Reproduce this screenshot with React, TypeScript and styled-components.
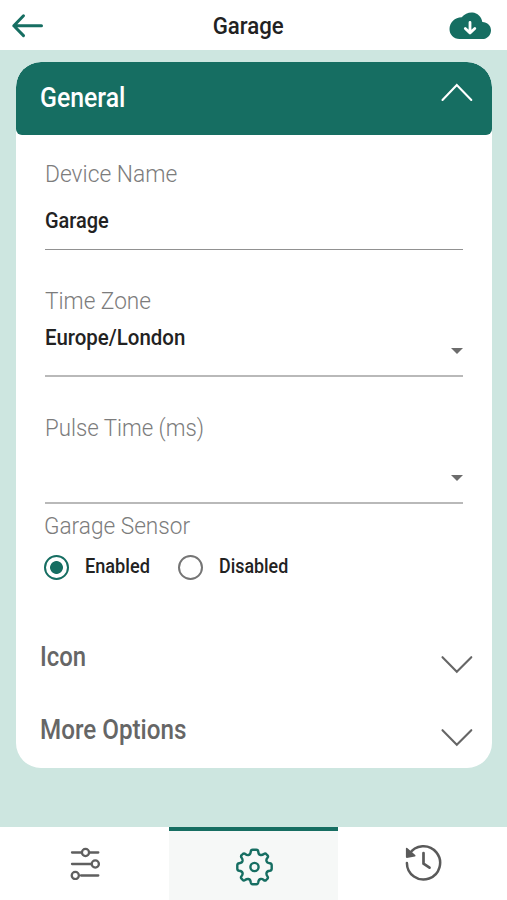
import React from 'react';
import styled, { createGlobalStyle } from 'styled-components';

const green = '#166e62';
const grey = '#666666';

const GlobalStyle = createGlobalStyle`
  * { box-sizing: border-box; }
  body { margin: 0; background: #cde6e0; font-family: Roboto, "Liberation Sans", sans-serif; }
  button { border: 0; padding: 0; background: none; font: inherit; color: inherit; display: flex; }
  svg { display: block; flex: none; }
`;

const Screen = styled.div`
  width: 507px;
  height: 900px;
  display: flex;
  flex-direction: column;
  background: #cde6e0;
  overflow: hidden;
`;

const TopBar = styled.header`
  height: 50px;
  flex: none;
  display: grid;
  grid-template-columns: 60px 1fr 60px;
  align-items: center;
  padding: 1px 15px 0 11px;
  background: #fff;
`;

const Title = styled.h1`
  margin: 0;
  padding-right: 7px;
  text-align: center;
  font-size: 23.5px;
  font-weight: 500;
  line-height: 28px;
  transform: scaleX(0.945);
  color: #222;
`;

const CloudButton = styled.button`
  justify-self: end;
`;

const Main = styled.main`
  flex: 1;
  padding: 12px 15px 0 16px;
`;

const Card = styled.section`
  height: 706px;
  border-radius: 25px;
  background: #fff;
  overflow: hidden;
`;

const SectionHeader = styled.div<{ $open?: boolean }>`
  height: 73px;
  display: flex;
  align-items: flex-start;
  justify-content: space-between;
  padding: 21px 19px 0 24px;
  border-radius: ${(p) => (p.$open ? '25px 25px 6px 6px' : '0')};
  background: ${(p) => (p.$open ? green : 'transparent')};
  color: ${(p) => (p.$open ? '#fff' : grey)};
`;

const SectionTitle = styled.h2<{ $stretch: number; $top: number }>`
  margin: ${(p) => p.$top}px 0 0;
  font-size: 27px;
  font-weight: 500;
  line-height: 28px;
  transform: scaleX(${(p) => p.$stretch});
  transform-origin: left;
`;

const ChevronBox = styled.span<{ $open?: boolean }>`
  display: flex;
  padding-top: ${(p) => (p.$open ? 0 : 14)}px;
`;

const Field = styled.div<{ $first?: boolean }>`
  height: ${(p) => (p.$first ? 115 : 127)}px;
  margin: 0 29px;
  padding-top: ${(p) => (p.$first ? 25 : 37)}px;
  border-bottom: ${(p) => (p.$first ? '1px solid #919191' : '2px solid #b9b9b9')};
`;

const Label = styled.div<{ $stretch: number }>`
  font-size: 24px;
  font-weight: 300;
  line-height: 28px;
  transform: scaleX(${(p) => p.$stretch});
  transform-origin: left;
  color: #7c7c7c;
`;

const Value = styled.div<{ $gap: number; $stretch: number }>`
  margin-top: ${(p) => p.$gap}px;
  font-size: 22px;
  font-weight: 500;
  line-height: 28px;
  transform: scaleX(${(p) => p.$stretch});
  transform-origin: left;
  color: #222;
`;

const SelectRow = styled.div`
  height: 64px;
  display: flex;
  justify-content: space-between;
`;

const Caret = styled.span`
  width: 0;
  height: 0;
  margin-top: 33px;
  border-left: 6px solid transparent;
  border-right: 6px solid transparent;
  border-top: 6px solid #6c6c6c;
`;

const Sensor = styled.div`
  height: 116px;
  padding: 8px 28px 0;
`;

const Options = styled.div`
  display: flex;
  margin-top: 15px;
`;

const Option = styled.label`
  width: 134px;
  display: flex;
  align-items: flex-start;
  gap: 16px;
  color: #222;
`;

const OptionText = styled.span<{ $stretch: number }>`
  font-size: 19.5px;
  font-weight: 500;
  line-height: 24px;
  transform: scaleX(${(p) => p.$stretch});
  transform-origin: left;
`;

const Radio = styled.span<{ $on?: boolean }>`
  flex: none;
  width: 25px;
  height: 25px;
  border-radius: 50%;
  border: 2.5px solid ${(p) => (p.$on ? green : '#757575')};
  background: ${(p) => (p.$on ? `radial-gradient(circle, ${green} 6px, transparent 6.8px)` : 'transparent')};
`;

const TabBar = styled.nav`
  height: 73px;
  flex: none;
  display: grid;
  grid-template-columns: 169px 169px 1fr;
  background: #fff;
`;

const Tab = styled.button<{ $active?: boolean }>`
  justify-content: center;
  align-items: flex-start;
  padding-top: ${(p) => (p.$active ? 16 : 17)}px;
  border-top: ${(p) => (p.$active ? `4px solid ${green}` : '0')};
  background: ${(p) => (p.$active ? '#f6f8f7' : '#fff')};
`;

function Chevron({ up = false }: { up?: boolean }) {
  return (
    <svg width="32" height="20" viewBox="0 0 32 20" fill="none" stroke="currentColor" strokeWidth="2.1" strokeLinecap="round">
      <path d={up ? 'M1.5 17 L15.8 2 L30.3 17' : 'M1.5 2.2 L15.8 16.7 L30.3 2.2'} />
    </svg>
  );
}

function BackArrow() {
  return (
    <svg width="34" height="26" viewBox="0 0 34 26" fill="none" stroke={green} strokeWidth="3" strokeLinecap="round" strokeLinejoin="round">
      <path d="M30.5 12.8 H2.8 M12.5 2.8 L2.8 12.8 L12.5 22.6" />
    </svg>
  );
}

function CloudDownload() {
  return (
    <svg width="43" height="28" viewBox="0.5 0 43 28">
      <path fill={green} d="M11 27 C5 27 1 22.6 1 17 C1 10.5 6.3 5.2 13.2 5.2 C16 2 20 0.2 24 .5 C29 1 33 4.8 33.8 9.9 C39 10 42.5 13.6 42.5 18.2 C42.5 23.2 38.7 27 33.8 27 Z" />
      <path d="M21.5 10.5 V20.5 M16.8 16.5 L21.5 21 L26.3 16.5" fill="none" stroke="#fff" strokeWidth="2.8" strokeLinecap="round" strokeLinejoin="round" />
    </svg>
  );
}

function SlidersIcon() {
  return (
    <svg width="32" height="36" viewBox="0 0 32 36" fill="none" stroke="#5f5f5f" strokeWidth="2.3" strokeLinecap="round">
      <path d="M3 8.5 H12 M20 8.5 H29.3 M3 20 H22 M12 31.5 H29.3" />
      <circle cx="16.5" cy="8.5" r="3.6" />
      <circle cx="26.3" cy="20" r="3.6" />
      <circle cx="6.3" cy="31.5" r="3.6" />
    </svg>
  );
}

function GearIcon() {
  return (
    <svg width="40" height="40" viewBox="-20.5 -20 40 40" fill="none" stroke={green} strokeWidth="2.4" strokeLinejoin="round">
      <path d="M-3.8 -15.2 Q-3.6 -17.2 -1.8 -17.2 H1.8 Q3.6 -17.2 3.8 -15.2 Q4 -12.4 6 -12 Q7.8 -11.7 9.4 -13 Q10.8 -14 12 -12.7 L13 -11.7 Q14.1 -10.5 13 -9.2 Q11.5 -7.5 12 -6 Q12.5 -4 15.2 -3.8 Q17.2 -3.6 17.2 -1.8 V1.8 Q17.2 3.6 15.2 3.8 Q12.4 4 12 6 Q11.7 7.8 13 9.4 Q14 10.8 12.7 12 L11.7 13 Q10.5 14.1 9.2 13 Q7.5 11.5 6 12 Q4 12.5 3.8 15.2 Q3.6 17.2 1.8 17.2 H-1.8 Q-3.6 17.2 -3.8 15.2 Q-4 12.4 -6 12 Q-7.8 11.7 -9.4 13 Q-10.8 14 -12 12.7 L-13 11.7 Q-14.1 10.5 -13 9.2 Q-11.5 7.5 -12 6 Q-12.5 4 -15.2 3.8 Q-17.2 3.6 -17.2 1.8 V-1.8 Q-17.2 -3.6 -15.2 -3.8 Q-12.4 -4 -12 -6 Q-11.7 -7.8 -13 -9.4 Q-14 -10.8 -12.7 -12 L-11.7 -13 Q-10.5 -14.1 -9.2 -13 Q-7.5 -11.5 -6 -12 Q-4 -12.5 -3.8 -15.2 Z" />
      <circle r="4.1" />
    </svg>
  );
}

function HistoryIcon() {
  return (
    <svg width="40" height="40" viewBox="0.3 0.5 40 40" fill="none" stroke="#5a5a5a" strokeWidth="2.5" strokeLinecap="round" strokeLinejoin="round">
      <path d="M4.2 19.4 A16.6 16.6 0 1 0 6.6 10.8" />
      <path d="M4 5 V13.6 L12 12.2 Z" fill="#5a5a5a" strokeWidth="1.6" />
      <path d="M20.8 9.5 V20.2 L26.8 24.2" strokeWidth="2.7" />
    </svg>
  );
}

export default function App() {
  return (
    <Screen>
      <GlobalStyle />
      <TopBar>
        <button aria-label="Back"><BackArrow /></button>
        <Title>Garage</Title>
        <CloudButton aria-label="Download"><CloudDownload /></CloudButton>
      </TopBar>
      <Main>
        <Card>
          <SectionHeader $open>
            <SectionTitle $stretch={0.92} $top={1}>General</SectionTitle>
            <ChevronBox $open><Chevron up /></ChevronBox>
          </SectionHeader>
          <Field $first>
            <Label $stretch={0.95}>Device Name</Label>
            <Value $gap={19} $stretch={0.907}>Garage</Value>
          </Field>
          <Field>
            <Label $stretch={0.942}>Time Zone</Label>
            <SelectRow>
              <Value $gap={9} $stretch={0.93}>Europe/London</Value>
              <Caret />
            </SelectRow>
          </Field>
          <Field>
            <Label $stretch={0.927}>Pulse Time (ms)</Label>
            <SelectRow>
              <Value $gap={9} $stretch={1} />
              <Caret />
            </SelectRow>
          </Field>
          <Sensor>
            <Label $stretch={0.943}>Garage Sensor</Label>
            <Options>
              <Option><Radio $on /><OptionText $stretch={0.93}>Enabled</OptionText></Option>
              <Option><Radio /><OptionText $stretch={0.915}>Disabled</OptionText></Option>
            </Options>
          </Sensor>
          <SectionHeader>
            <SectionTitle $stretch={0.885} $top={2}>Icon</SectionTitle>
            <ChevronBox><Chevron /></ChevronBox>
          </SectionHeader>
          <SectionHeader>
            <SectionTitle $stretch={0.897} $top={2}>More Options</SectionTitle>
            <ChevronBox><Chevron /></ChevronBox>
          </SectionHeader>
        </Card>
      </Main>
      <TabBar>
        <Tab aria-label="Controls"><SlidersIcon /></Tab>
        <Tab $active aria-label="Settings"><GearIcon /></Tab>
        <Tab aria-label="History"><HistoryIcon /></Tab>
      </TabBar>
    </Screen>
  );
}
